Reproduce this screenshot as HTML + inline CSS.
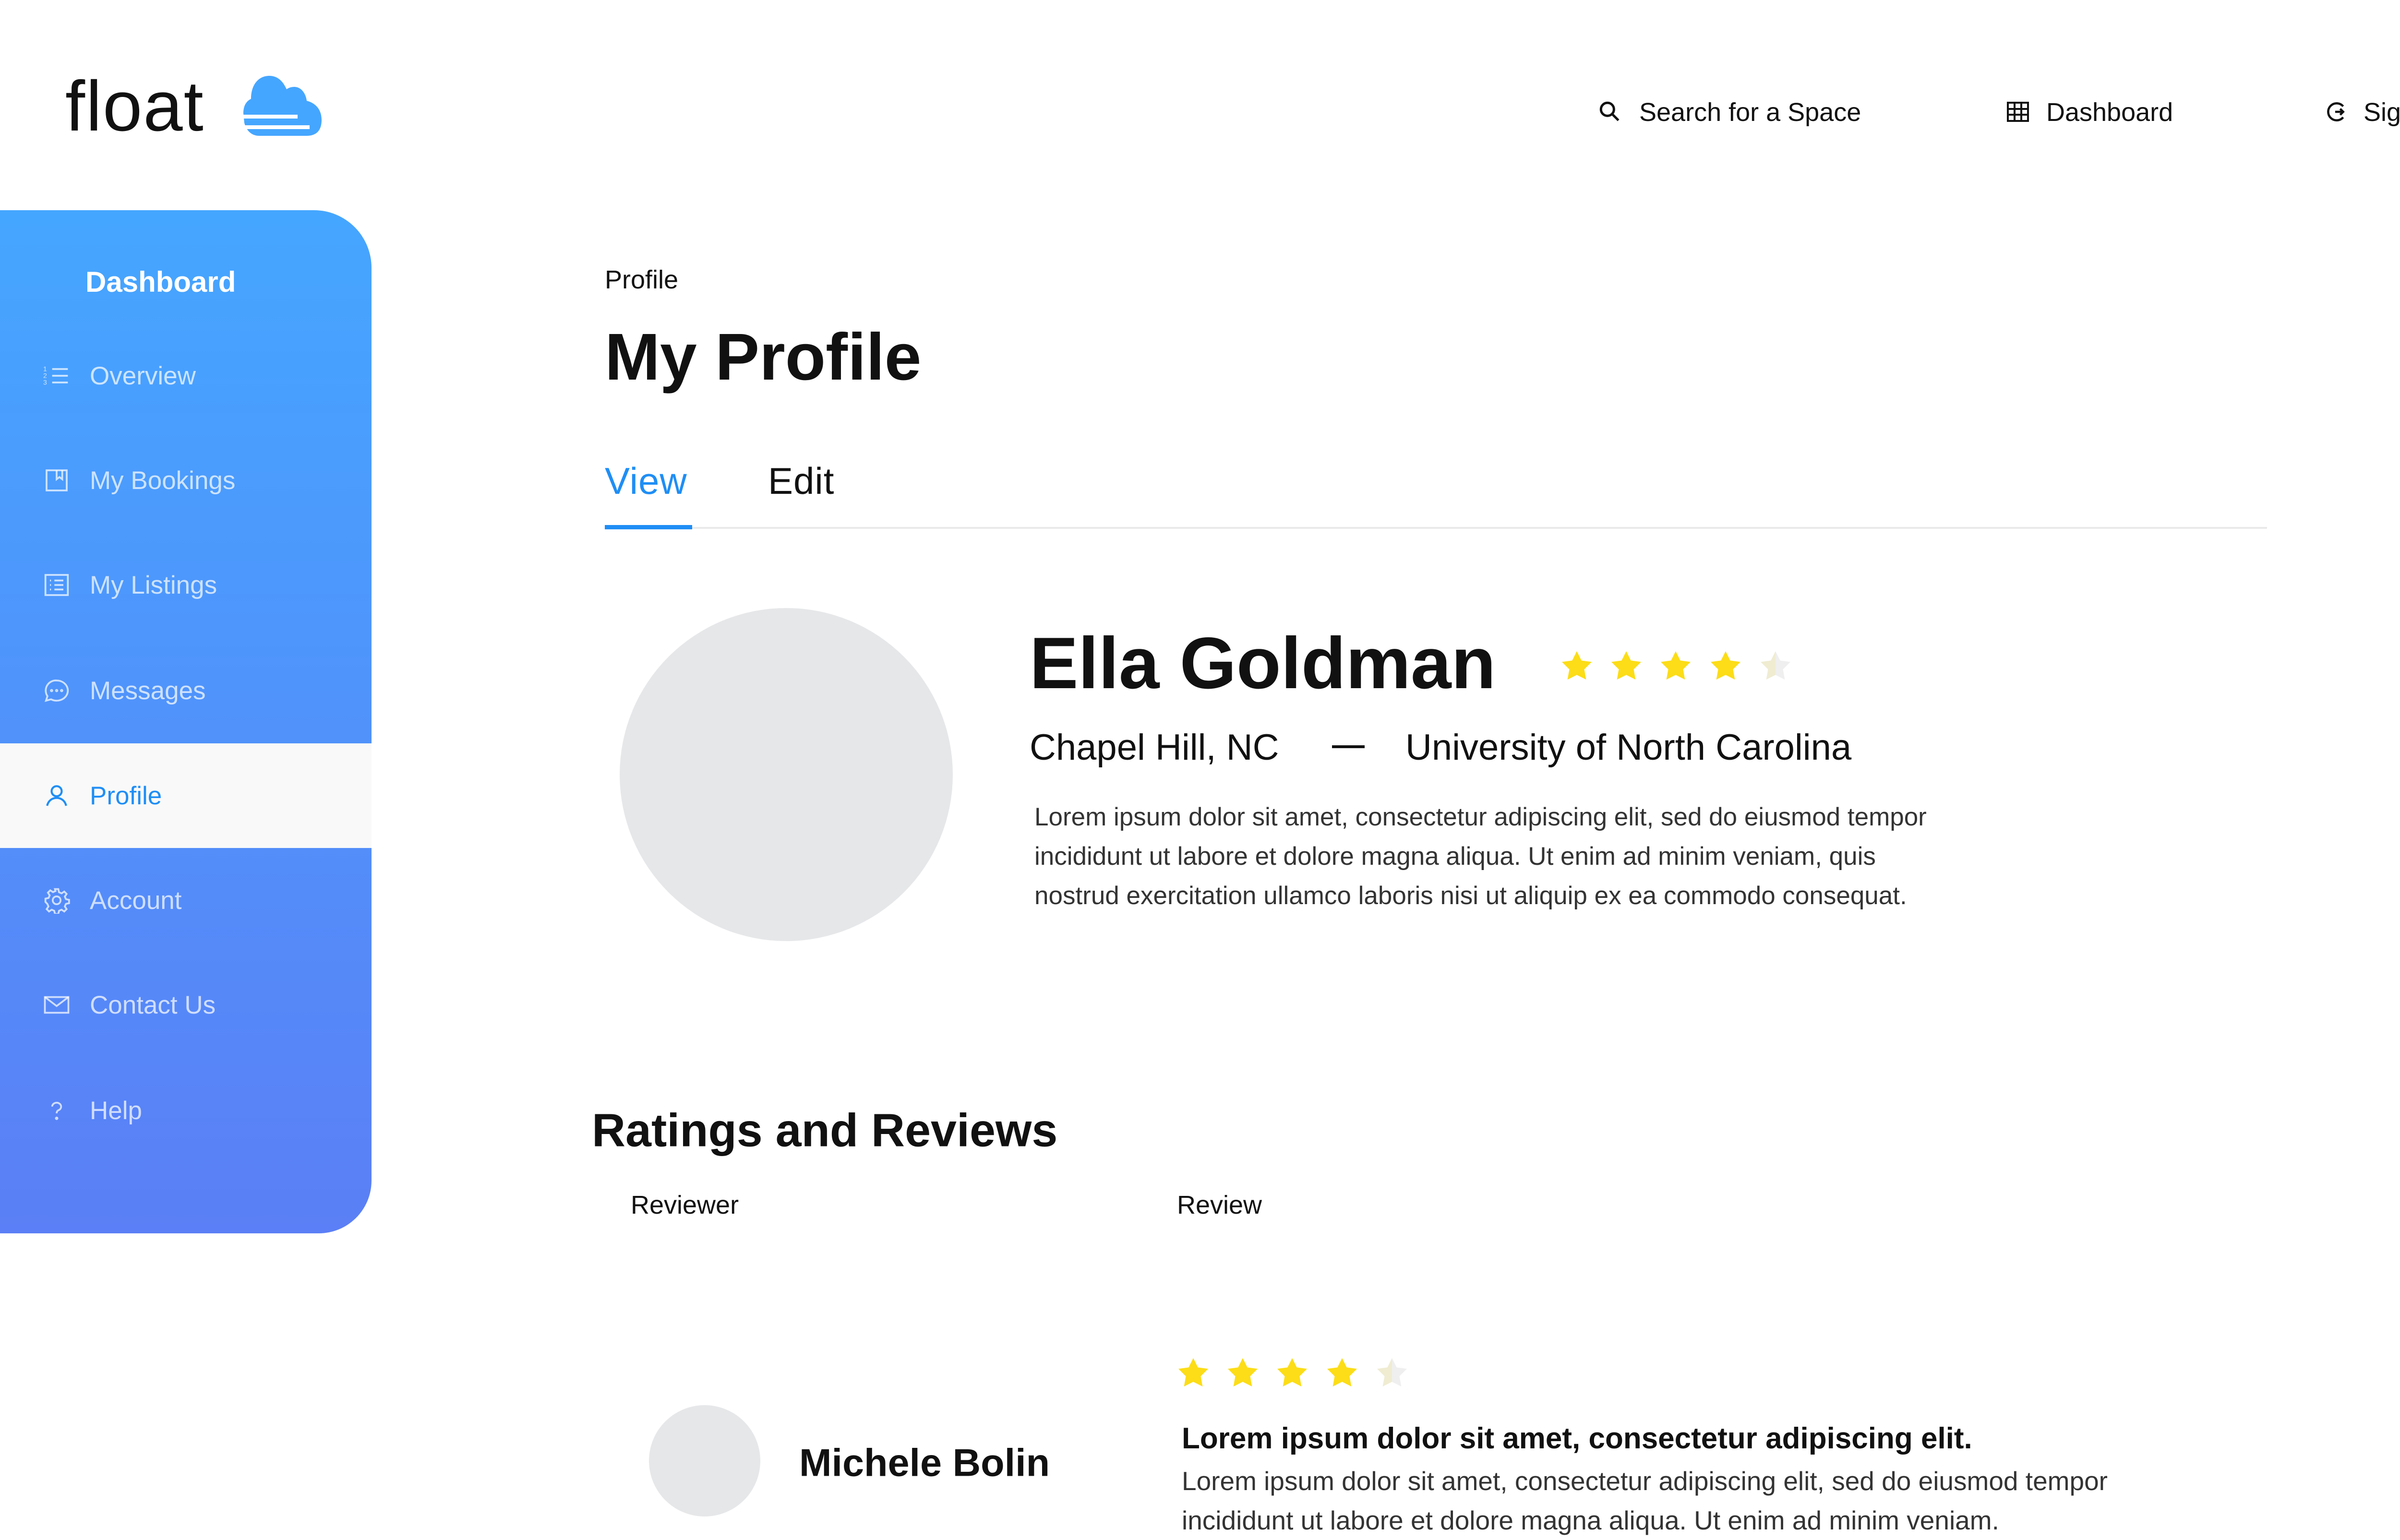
<!DOCTYPE html>
<html><head><meta charset="utf-8"><style>
*{margin:0;padding:0;box-sizing:border-box}
body{width:5338px;height:3200px;background:#fff;position:relative;overflow:hidden;font-family:"Liberation Sans",sans-serif;color:#111}
.a{position:absolute;white-space:nowrap;line-height:1;transform:translateY(-50%)}
.side{position:absolute;left:0;top:438px;width:774px;height:2132px;background:linear-gradient(#45a6ff,#5b7ff6);border-radius:0 120px 110px 0}
.nav{position:absolute;left:0;width:774px;height:218px;display:flex;align-items:center;color:rgba(255,255,255,0.72);font-size:53px}
.nav svg{position:absolute;left:90px;width:56px;height:56px}
.nav span{position:absolute;left:187px}
.star{position:absolute;width:66px;height:62px}
</style></head><body>
<div class="a" style="left:136px;top:222px;font-size:148px;font-weight:400;letter-spacing:2px">float</div>
<svg style="position:absolute;left:495px;top:156px" width="220" height="130" viewBox="0 0 220 130">
<path d="M12 80 C12 62 20 54 28 50 C28 20 44 2 66 2 C84 2 95 14 102 30 C106 27 112 25 118 25 C132 25 142 38 144 54 C160 58 175 70 175 94 C175 116 164 127 144 127 L45 127 C28 127 18 115 14 100 Z" fill="#45a6ff"/>
<rect x="0" y="83" width="125" height="8" fill="#fff"/><rect x="0" y="105" width="150" height="8" fill="#fff"/>
</svg>

<!-- header nav -->
<svg style="position:absolute;left:3328px;top:207px" width="50" height="50" viewBox="0 0 24 24" fill="none" stroke="#111" stroke-width="2.4"><circle cx="10" cy="10" r="6.5"/><path d="M15 15l6 6"/></svg>
<div class="a" style="left:3415px;top:234px;font-size:54px">Search for a Space</div>
<svg style="position:absolute;left:4180px;top:210px" width="48" height="46" viewBox="0 0 24 23" fill="none" stroke="#111" stroke-width="2"><rect x="1.5" y="2" width="21" height="19"/><path d="M1.5 8.5h21M1.5 14.5h21M8.5 2v19M15.5 2v19"/></svg>
<div class="a" style="left:4263px;top:234px;font-size:54px">Dashboard</div>
<svg style="position:absolute;left:4842px;top:208px" width="50" height="50" viewBox="0 0 24 24" fill="none" stroke="#111" stroke-width="2.2"><path d="M19 6.5A8.5 8.5 0 1 0 19 17.5"/><path d="M11 12h8M16 9l3 3-3 3"/></svg>
<div class="a" style="left:4924px;top:234px;font-size:54px">Sign Out</div>

<!-- sidebar -->
<div class="side"></div>
<div class="a" style="left:178px;top:588px;font-size:60px;font-weight:700;color:#fff">Dashboard</div>
<div class="nav" style="top:674px"><svg viewBox="0 0 24 24" fill="none" stroke="rgba(255,255,255,.72)" stroke-width="1.6"><path d="M8 6h14M8 12h14M8 18h14"/><text x="0" y="8" font-size="6" fill="rgba(255,255,255,.72)" stroke="none">1</text><text x="0" y="14" font-size="6" fill="rgba(255,255,255,.72)" stroke="none">2</text><text x="0" y="20" font-size="6" fill="rgba(255,255,255,.72)" stroke="none">3</text></svg><span>Overview</span></div>
<div class="nav" style="top:892px"><svg viewBox="0 0 24 24" fill="none" stroke="rgba(255,255,255,.72)" stroke-width="1.6"><rect x="3" y="3" width="18" height="18"/><path d="M12 3v8l2.5-2 2.5 2V3"/></svg><span>My Bookings</span></div>
<div class="nav" style="top:1110px"><svg viewBox="0 0 24 24" fill="none" stroke="rgba(255,255,255,.72)" stroke-width="1.6"><rect x="2" y="3" width="20" height="18"/><path d="M10 8h8M10 12h8M10 16h8M6 8h1M6 12h1M6 16h1"/></svg><span>My Listings</span></div>
<div class="nav" style="top:1330px"><svg viewBox="0 0 24 24" fill="none" stroke="rgba(255,255,255,.72)" stroke-width="1.6"><path d="M12 3a10 9 0 1 1-5 16.8L2.5 21l1.3-4A9 9 0 0 1 12 3z"/><circle cx="7.5" cy="12" r=".6"/><circle cx="12" cy="12" r=".6"/><circle cx="16.5" cy="12" r=".6"/></svg><span>Messages</span></div>
<div style="position:absolute;left:0;top:1549px;width:774px;height:218px;background:#f9f9f9"></div>
<div class="nav" style="top:1549px;color:#1f8ef5"><svg viewBox="0 0 24 24" fill="none" stroke="#1f8ef5" stroke-width="1.8"><circle cx="12" cy="8" r="4.5"/><path d="M3.5 21c1-4.5 4.5-7 8.5-7s7.5 2.5 8.5 7"/></svg><span>Profile</span></div>
<div class="nav" style="top:1767px"><svg viewBox="0 0 24 24" fill="none" stroke="rgba(255,255,255,.72)" stroke-width="1.6"><circle cx="12" cy="12" r="3.5"/><path d="M10.5 2h3l.6 2.8 2.3 1 2.4-1.6 2.1 2.1-1.6 2.4 1 2.3 2.8.6v3l-2.8.6-1 2.3 1.6 2.4-2.1 2.1-2.4-1.6-2.3 1-.6 2.8h-3l-.6-2.8-2.3-1-2.4 1.6-2.1-2.1 1.6-2.4-1-2.3L2 13.5v-3l2.8-.6 1-2.3-1.6-2.4 2.1-2.1 2.4 1.6 2.3-1z"/></svg><span>Account</span></div>
<div class="nav" style="top:1985px"><svg viewBox="0 0 24 24" fill="none" stroke="rgba(255,255,255,.72)" stroke-width="1.6"><rect x="1.5" y="5" width="21" height="14"/><path d="M1.5 5l10.5 8 10.5-8"/></svg><span>Contact Us</span></div>
<div class="nav" style="top:2205px"><svg viewBox="0 0 24 24" fill="none" stroke="rgba(255,255,255,.72)" stroke-width="1.6"><path d="M8 8.5a4 3.5 0 1 1 5.5 3.3c-1 .5-1.5 1.2-1.5 2.7"/><circle cx="12" cy="19" r=".7"/></svg><span>Help</span></div>

<!-- main -->
<div class="a" style="left:1260px;top:583px;font-size:54px">Profile</div>
<div class="a" style="left:1260px;top:744px;font-size:138px;font-weight:700">My Profile</div>
<div class="a" style="left:1260px;top:1002px;font-size:78px;color:#1f8ef5;letter-spacing:1px">View</div>
<div class="a" style="left:1600px;top:1002px;font-size:78px;letter-spacing:1px">Edit</div>
<div style="position:absolute;left:1260px;top:1098px;width:3463px;height:4px;background:#eaeaea"></div>
<div style="position:absolute;left:1260px;top:1094px;width:182px;height:9px;background:#1f8ef5"></div>

<div style="position:absolute;left:1291px;top:1267px;width:694px;height:694px;border-radius:50%;background:#e6e7e9"></div>
<div class="a" style="left:2145px;top:1382px;font-size:152px;font-weight:700">Ella Goldman</div>

<svg width="0" height="0" style="position:absolute"><defs>
<path id="st" d="M33 1 L43 21 L65 24 L49 40 L53 62 L33 52 L13 62 L17 40 L1 24 L23 21 Z" stroke-linejoin="round"/>
<linearGradient id="half"><stop offset=".5" stop-color="#efecd2"/><stop offset=".5" stop-color="#efefef"/></linearGradient>
</defs></svg>
<svg class="star" style="left:3252px;top:1356px" viewBox="0 0 66 64"><use href="#st" fill="#fcdd17"/></svg>
<svg class="star" style="left:3355px;top:1356px" viewBox="0 0 66 64"><use href="#st" fill="#fcdd17"/></svg>
<svg class="star" style="left:3458px;top:1356px" viewBox="0 0 66 64"><use href="#st" fill="#fcdd17"/></svg>
<svg class="star" style="left:3562px;top:1356px" viewBox="0 0 66 64"><use href="#st" fill="#fcdd17"/></svg>
<svg class="star" style="left:3666px;top:1356px" viewBox="0 0 66 64"><use href="#st" fill="url(#half)"/></svg>

<div class="a" style="left:2145px;top:1558px;font-size:76px">Chapel Hill, NC</div>
<div style="position:absolute;left:2775px;top:1553px;width:68px;height:6px;background:#111"></div>
<div class="a" style="left:2928px;top:1558px;font-size:76px">University of North Carolina</div>
<div style="position:absolute;left:2155px;top:1662px;font-size:53px;line-height:82px;color:#333;white-space:nowrap">Lorem ipsum dolor sit amet, consectetur adipiscing elit, sed do eiusmod tempor<br>incididunt ut labore et dolore magna aliqua. Ut enim ad minim veniam, quis<br>nostrud exercitation ullamco laboris nisi ut aliquip ex ea commodo consequat.</div>

<div class="a" style="left:1233px;top:2355px;font-size:97px;font-weight:700">Ratings and Reviews</div>
<div class="a" style="left:1314px;top:2511px;font-size:54px">Reviewer</div>
<div class="a" style="left:2452px;top:2511px;font-size:54px">Review</div>

<svg class="star" style="left:2453px;top:2829px" viewBox="0 0 66 64"><use href="#st" fill="#fcdd17"/></svg>
<svg class="star" style="left:2556px;top:2829px" viewBox="0 0 66 64"><use href="#st" fill="#fcdd17"/></svg>
<svg class="star" style="left:2659px;top:2829px" viewBox="0 0 66 64"><use href="#st" fill="#fcdd17"/></svg>
<svg class="star" style="left:2763px;top:2829px" viewBox="0 0 66 64"><use href="#st" fill="#fcdd17"/></svg>
<svg class="star" style="left:2867px;top:2829px" viewBox="0 0 66 64"><use href="#st" fill="url(#half)"/></svg>

<div style="position:absolute;left:1352px;top:2928px;width:232px;height:232px;border-radius:50%;background:#e6e7e9"></div>
<div class="a" style="left:1665px;top:3049px;font-size:81px;font-weight:700">Michele Bolin</div>
<div class="a" style="left:2462px;top:2998px;font-size:62px;font-weight:700">Lorem ipsum dolor sit amet, consectetur adipiscing elit.</div>
<div style="position:absolute;left:2462px;top:3045px;font-size:55px;line-height:82px;color:#333;white-space:nowrap">Lorem ipsum dolor sit amet, consectetur adipiscing elit, sed do eiusmod tempor<br>incididunt ut labore et dolore magna aliqua. Ut enim ad minim veniam.</div>
</body></html>
